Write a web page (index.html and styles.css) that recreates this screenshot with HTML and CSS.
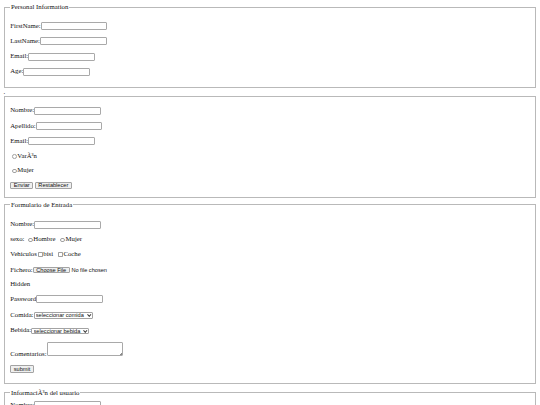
FILE: index.html
```html
<!DOCTYPE html>
<html lang="es">
<head>
<meta charset="utf-8">
<title>Formularios</title>
<link rel="stylesheet" href="styles.css">
</head>
<body>
<form class="form-personal">
  <fieldset class="box box-personal">
    <legend>Personal Information</legend>
    <p>FirstName:<input type="text" class="field"></p>
    <p>LastName:<input type="text" class="field"></p>
    <p>Email:<input type="email" class="field"></p>
    <p>Age:<input type="text" class="field"></p>
  </fieldset>
</form>
<div class="stray">.</div>
<form class="form-signup">
  <fieldset class="box box-signup">
    <p>Nombre:<input type="text" class="field"></p>
    <p>Apellido:<input type="text" class="field"></p>
    <p>Email:<input type="email" class="field"></p>
    <p><input type="radio" name="genero" class="radio">VarÃ³n</p>
    <p><input type="radio" name="genero" class="radio">Mujer</p>
    <div class="actions"><input type="submit" value="Enviar" class="btn"> <input type="reset" value="Restablecer" class="btn"></div>
  </fieldset>
</form>
<form class="form-entry">
  <fieldset class="box box-entry">
    <legend>Formulario de Entrada</legend>
    <p>Nombre:<input type="text" class="field"></p>
    <p>sexo: <input type="radio" name="sexo" class="radio">Hombre <input type="radio" name="sexo" class="radio radio-next">Mujer</p>
    <p>Vehiculos<input type="checkbox" class="check">bisi <input type="checkbox" class="check check-next">Coche</p>
    <p class="row-file">Fichero:<input type="file" class="file"></p>
    <p>Hidden<input type="hidden" value="oculto"></p>
    <p>Password<input type="password" class="field"></p>
    <p class="row-pick">Comida:<span class="pick-wrap"><select class="pick"><option>seleccionar comida</option></select></span></p>
    <p class="row-pick">Bebida:<span class="pick-wrap"><select class="pick"><option>seleccionar bebida</option></select></span></p>
    <p>Comentarios:<span class="notes-wrap"><textarea class="notes"></textarea></span></p>
    <p><input type="submit" value="submit" class="btn"></p>
  </fieldset>
  <fieldset class="box box-user">
    <legend>InformaciÃ³n del usuario</legend>
    <p class="row-first">Nombre:<input type="text" class="field"></p>
    <p>Apellido:<input type="text" class="field"></p>
    <p>Email:<input type="email" class="field"></p>
  </fieldset>
</form>
</body>
</html>
```

FILE: styles.css
```css
html {
  background: #fff;
}
body {
  margin: 3.375px;
  font-family: "Liberation Serif", "Times New Roman", serif;
  font-size: 6.75px;
  line-height: 7.8px;
  color: #111;
}
form {
  margin: 0;
}
p {
  margin: 6.75px 0;
}
.box {
  margin: 0 0.84px;
  padding: 2.36px 5.06px 4.22px;
  border: 1px solid #b9b9b9;
}
.box legend {
  padding: 0 0.84px;
  line-height: 7.8px;
}
.box-personal {
  padding-top: 3.9px;
  padding-bottom: 4.7px;
}
.stray {
  line-height: 7.9px;
}
.box-signup {
  padding-bottom: 7.4px;
}
.actions {
  margin-top: 1.3px;
}
.form-signup {
  margin-bottom: 3.3px;
}
.box-entry {
  padding-top: 4.66px;
  padding-bottom: 3.22px;
  margin-bottom: 4.8px;
}
.box-user {
  padding-top: 3.9px;
}
.row-first {
  margin-top: 0;
}
.row-file,
.row-pick {
  margin-top: 7.75px;
}

.field {
  box-sizing: border-box;
  width: 66.7px;
  height: 8px;
  margin: 0;
  padding: 0 1px;
  border: 1px solid #a9a9a9;
  border-radius: 1px;
  background: #fff;
  font-family: "Liberation Sans", Arial, sans-serif;
  font-size: 5.625px;
  vertical-align: middle;
}
.btn {
  box-sizing: border-box;
  height: 7.7px;
  margin: 0;
  padding: 0 2.5px;
  border: 1px solid #a3a3a3;
  border-radius: 1px;
  background: #efefef;
  color: #111;
  font-family: "Liberation Sans", Arial, sans-serif;
  font-size: 5.625px;
  line-height: 5px;
  vertical-align: middle;
}
.radio,
.check {
  -webkit-appearance: none;
  appearance: none;
  box-sizing: border-box;
  width: 4.7px;
  height: 4.7px;
  margin: 0 0.6px 0 1.8px;
  border: 1px solid #a0a0a0;
  background: #fff;
  vertical-align: middle;
}
.radio {
  border-radius: 50%;
}
.check {
  border-radius: 0.8px;
  margin: 0 0.8px 0 1px;
}
.radio-next,
.check-next {
  margin-left: 3.2px;
}
.file {
  margin: 0;
  height: 6.9px;
  color: #111;
  font-family: "Liberation Sans", Arial, sans-serif;
  font-size: 5.625px;
  line-height: 6.9px;
  vertical-align: middle;
}
.file::file-selector-button {
  box-sizing: border-box;
  height: 6.9px;
  margin: 0 1.7px 0 0;
  padding: 0 2.5px;
  border: 1px solid #a3a3a3;
  border-radius: 1px;
  background: #efefef;
  color: #111;
  font-family: "Liberation Sans", Arial, sans-serif;
  font-size: 5.625px;
  line-height: 4.6px;
  vertical-align: top;
}
.pick-wrap {
  position: relative;
  display: inline-block;
  vertical-align: middle;
}
.pick-wrap::after {
  content: "";
  position: absolute;
  right: 2.3px;
  top: 50%;
  width: 1.5px;
  height: 1.5px;
  border-right: 0.8px solid #333;
  border-bottom: 0.8px solid #333;
  transform: translateY(-75%) rotate(45deg);
  pointer-events: none;
}
.pick {
  -webkit-appearance: none;
  appearance: none;
  display: block;
  box-sizing: border-box;
  height: 6.7px;
  margin: 0;
  padding: 0 7px 0 1.3px;
  border: 1px solid #a3a3a3;
  border-radius: 1px;
  background: #fff;
  color: #111;
  font-family: "Liberation Sans", Arial, sans-serif;
  font-size: 5.625px;
  line-height: 4.7px;
}
.notes-wrap {
  position: relative;
  display: inline-block;
  margin-top: 1px;
  margin-bottom: 0.6px;
}
.notes {
  display: block;
  box-sizing: border-box;
  width: 76.7px;
  height: 14.3px;
  margin: 0;
  padding: 0;
  border: 1px solid #a9a9a9;
  border-radius: 1px;
  resize: none;
  background: #fff;
}
.notes-wrap::after {
  content: "";
  position: absolute;
  right: 1.3px;
  bottom: 1.3px;
  width: 2.4px;
  height: 2.4px;
  background: linear-gradient(135deg, transparent 45%, #8a8a8a 45%, #8a8a8a 56%, transparent 56%, transparent 74%, #8a8a8a 74%, #8a8a8a 86%, transparent 86%);
}
```
